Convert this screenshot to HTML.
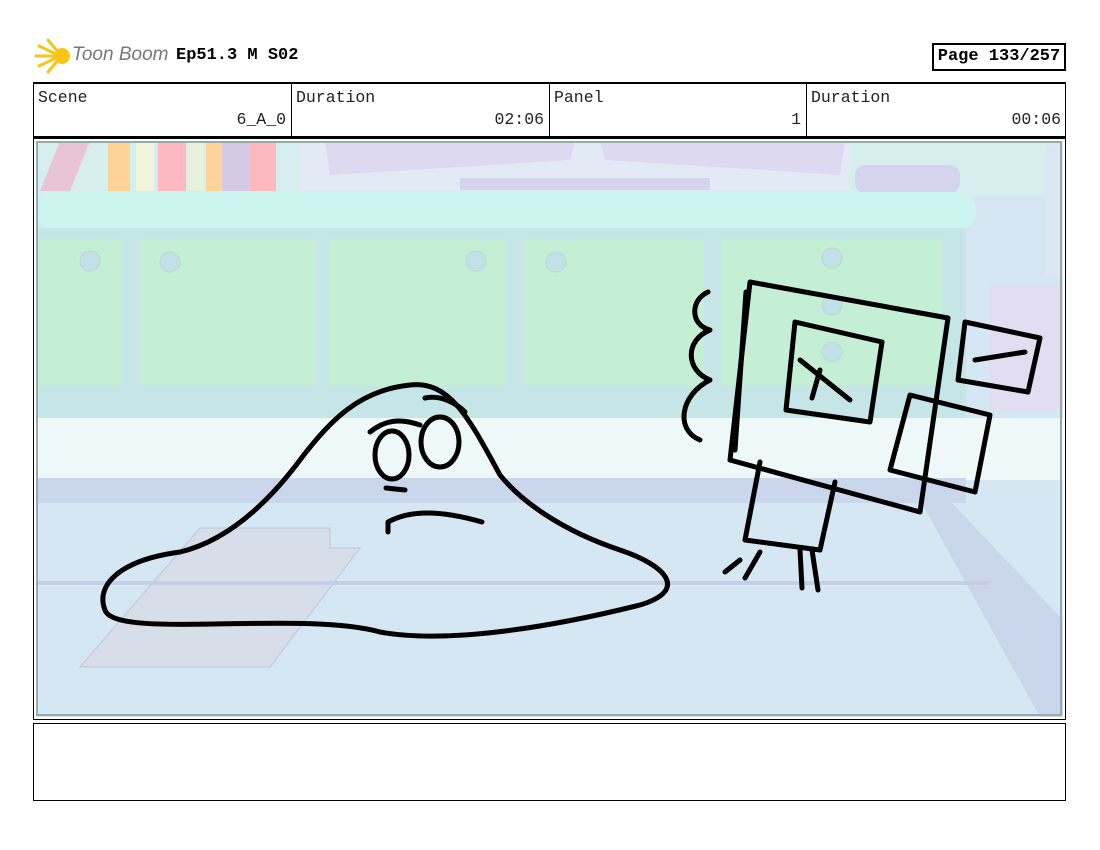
<!DOCTYPE html>
<html><head><meta charset="utf-8"><style>
body{margin:0;width:1100px;height:850px;background:#fff;position:relative;font-family:"Liberation Mono",monospace;overflow:hidden}
.abs{position:absolute}
.hdr{left:33px;top:82px;width:1031px;height:52px;border:1px solid #000;border-top:2px solid #000;border-bottom:2px solid #000;}
.cell{position:absolute;top:0;height:52px;border-left:1px solid #000;font-size:16.5px;color:#222}
.cell .l{position:absolute;left:4px;top:4px}
.cell .r{position:absolute;right:5px;top:26px}
</style></head><body>
<svg class="abs" style="left:34px;top:38px" width="40" height="36" viewBox="0 0 40 36">
<g stroke="#f5c518" stroke-width="3" stroke-linecap="round"><line x1="2" y1="18" x2="22" y2="18"/><line x1="5" y1="8" x2="22" y2="16"/><line x1="5" y1="28" x2="22" y2="20"/><line x1="14" y1="2" x2="24" y2="14"/><line x1="14" y1="34" x2="24" y2="22"/></g>
<circle cx="28" cy="18" r="8" fill="#f5c518"/></svg>
<div class="abs" style="left:72px;top:44px;font-family:'Liberation Sans',sans-serif;font-style:italic;font-size:19px;color:#777">Toon Boom</div>
<div class="abs" style="left:176px;top:46px;font-weight:bold;font-size:17px">Ep51.3 M S02</div>
<div class="abs" style="left:932px;top:43px;width:130px;height:24px;border:2px solid #000;font-weight:bold;font-size:17px;line-height:24px;text-align:center">Page 133/257</div>
<div class="abs hdr">
<div class="cell" style="left:0;width:257px;border-left:none"><span class="l">Scene</span><span class="r">6_A_0</span></div>
<div class="cell" style="left:257px;width:257px"><span class="l">Duration</span><span class="r">02:06</span></div>
<div class="cell" style="left:515px;width:256px"><span class="l">Panel</span><span class="r">1</span></div>
<div class="cell" style="left:772px;width:259px"><span class="l">Duration</span><span class="r">00:06</span></div>
</div>
<div class="abs" style="left:33px;top:138px;width:1031px;height:580px;border:1px solid #000"></div>
<svg class="abs" style="left:36px;top:141px" width="1027" height="576" viewBox="36 141 1027 576">
<rect x="36" y="141" width="1027" height="576" fill="#d4e7f3"/>
<rect x="36" y="141" width="1027" height="55" fill="#d7eeee"/>
<rect x="108" y="141" width="22" height="50" fill="#fdd39a"/><rect x="136" y="141" width="18" height="50" fill="#f2f3dc"/><rect x="158" y="141" width="28" height="50" fill="#fcb9c0"/><rect x="188" y="141" width="16" height="50" fill="#e6f0dc"/><rect x="206" y="141" width="16" height="50" fill="#fdd39a"/><rect x="222" y="141" width="28" height="50" fill="#d6c9e6"/><rect x="250" y="141" width="26" height="50" fill="#fcb9c0"/>
<polygon points="40,191 60,141 90,141 70,191" fill="#e9c4d8"/>
<rect x="300" y="141" width="550" height="50" fill="#e3eaf5"/>
<polygon points="325,141 575,141 570,160 330,175" fill="#dcd9f0"/><polygon points="600,141 845,141 840,175 605,160" fill="#dcd9f0"/>
<rect x="460" y="178" width="250" height="12" fill="#d6d3ee"/>
<rect x="855" y="165" width="105" height="28" rx="10" fill="#d6d3ee"/>
<rect x="36" y="192" width="940" height="38" rx="18" fill="#cdf5f0"/>
<rect x="36" y="228" width="930" height="190" fill="#c6e5e6"/>
<g fill="#c5efd4"><rect x="40" y="239" width="82" height="146"/><rect x="140" y="239" width="176" height="146"/><rect x="330" y="239" width="176" height="146"/><rect x="524" y="239" width="180" height="146"/><rect x="722" y="239" width="220" height="146"/></g>
<g fill="#c2e1e6" stroke="#b8d6dc"><circle cx="90" cy="261" r="10"/><circle cx="170" cy="262" r="10"/><circle cx="476" cy="261" r="10"/><circle cx="556" cy="262" r="10"/><circle cx="832" cy="258" r="10"/><circle cx="832" cy="305" r="10"/><circle cx="832" cy="352" r="10"/></g>
<rect x="36" y="418" width="1027" height="62" fill="#eef8f9"/>
<rect x="36" y="478" width="930" height="25" fill="#c9d6ec"/>
<rect x="990" y="285" width="73" height="125" fill="#e2ddf0"/>
<rect x="1045" y="145" width="18" height="130" fill="#dde6f3"/>
<polygon points="930,480 1063,620 1063,717 1040,717 920,500" fill="#c9d6ec"/>
<polygon points="200,528 330,528 330,548 360,548 270,667 80,667" fill="#d7deea" stroke="#bcc6d8"/>
<line x1="36" y1="583" x2="990" y2="583" stroke="#c4cfe6" stroke-width="4"/>
<g fill="none" stroke="#000" stroke-width="5" stroke-linecap="round" stroke-linejoin="round">
<path d="M180,552 C120,560 95,585 105,610 C115,640 300,610 380,632 C450,645 560,625 640,605 C690,590 665,565 620,550 C560,530 520,500 500,475 C470,420 450,380 410,385 C360,390 330,420 300,460 C270,500 230,540 180,552"/>
<path d="M388,522 C410,510 440,510 482,522 M388,522 L388,532"/>
<ellipse cx="392" cy="455" rx="17" ry="24"/><ellipse cx="440" cy="442" rx="19" ry="25"/>
<path d="M370,432 C385,420 400,418 420,425 M425,398 C440,395 455,402 465,412"/>
<path d="M386,488 L405,490"/>
<path d="M750,282 L730,460 L920,512 L948,318 Z"/>
<path d="M708,292 C690,300 690,325 710,330 C685,340 685,370 710,380 C680,395 675,430 700,440"/>
<path d="M746,292 L735,450"/>
<path d="M795,322 L882,342 L870,422 L786,410 Z M800,360 L850,400 M820,370 L812,398"/>
<path d="M965,322 L1040,338 L1028,392 L958,380 Z M975,360 L1025,352"/>
<path d="M910,395 L990,415 L975,492 L890,470 Z"/>
<path d="M760,462 L745,540 L820,550 L835,482 M740,560 L725,572 M760,552 L745,578 M800,550 L802,588 M812,550 L818,590"/>
</g>
<rect x="37" y="142" width="1024" height="573" fill="none" stroke="#9aa" stroke-width="2"/>
</svg>
<div class="abs" style="left:33px;top:723px;width:1031px;height:76px;border:1px solid #000"></div>
</body></html>
